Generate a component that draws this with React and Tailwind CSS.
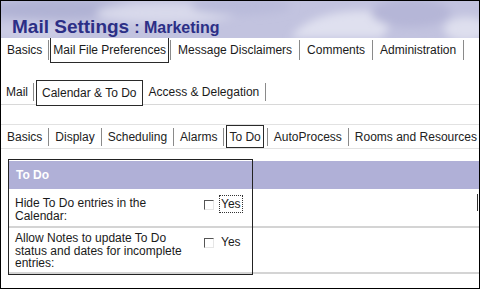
import React from 'react';

const Sep = ({ h = 'h-[20px]' }) => (
    <span className={`${h} w-px bg-[#8a8a8a] shrink-0`} />
);

const Tab = ({ label, selected, box = 'px-[5px]', pad = 'px-[6px]' }) => {
    if (selected) {
        return (
            <span className={`h-full flex items-center border border-[#2a2a2a] bg-white whitespace-nowrap ${box}`}>
                {label}
            </span>
        );
    }
    return <span className={`${pad} whitespace-nowrap`}>{label}</span>;
};

const HeaderArt = () => (
    <svg className="absolute inset-0" width="480" height="37" viewBox="0 0 480 37">
        <defs>
            <filter id="blur" x="-20%" y="-50%" width="140%" height="200%">
                <feGaussianBlur stdDeviation="4" />
            </filter>
        </defs>
        <rect width="480" height="37" fill="#c2c3df" />
        <g filter="url(#blur)">
            <ellipse cx="60" cy="8" rx="80" ry="10" fill="#b0b2d4" />
            <ellipse cx="165" cy="12" rx="70" ry="10" fill="#d8d9eb" />
            <ellipse cx="240" cy="5" rx="50" ry="9" fill="#b9bbda" />
            <path d="M290 37 C300 20 330 8 370 10 C390 11 395 20 380 37 Z" fill="#dfe0ef" />
            <ellipse cx="410" cy="12" rx="40" ry="14" fill="#b5b6d7" />
            <ellipse cx="465" cy="28" rx="22" ry="12" fill="#dedfee" />
            <ellipse cx="30" cy="30" rx="40" ry="8" fill="#cdcee5" />
        </g>
    </svg>
);

const Checkbox = () => (
    <span className="w-[10px] h-[10px] shrink-0 bg-white border-t border-l border-t-[#555] border-l-[#555] border-b border-r border-b-[#e6e6e6] border-r-[#e6e6e6]" />
);

const App = () => {
    return (
        <div className="w-[480px] h-[289px] overflow-hidden bg-white border border-black text-[12px] text-[#1a1a1a] font-['Liberation_Sans',Arial,sans-serif]">
            {/* title band */}
            <div className="relative h-[36px]">
                <HeaderArt />
                <h1 className="relative flex items-baseline pl-[11px] pt-[16px] leading-none font-bold text-[#2c2f86]">
                    <span className="text-[19px]">Mail Settings</span>
                    <span className="text-[16px] ml-[5px]">: Marketing</span>
                </h1>
            </div>

            {/* tab row 1 */}
            <div className="flex items-center h-[26px]">
                <Tab label="Basics" />
                <Sep />
                <Tab label="Mail File Preferences" selected box="ml-[1px] px-[2px]" />
                <span className="w-px" />
                <Sep />
                <Tab label="Message Disclaimers" pad="px-[7px]" />
                <Sep />
                <Tab label="Comments" pad="px-[7px]" />
                <Sep />
                <Tab label="Administration" pad="px-[7px]" />
                <Sep />
            </div>

            {/* tab row 2 */}
            <div className="flex items-center h-[25px] mt-[17px] border-b border-[#d8d8d8]">
                <span className="pl-[5px] pr-[5px]">Mail</span>
                <Sep h="h-[18px]" />
                <span className="h-[26px] self-start flex">
                    <Tab label="Calendar & To Do" selected box="ml-[2px] px-[5px]" />
                </span>
                <Tab label="Access & Delegation" />
                <Sep h="h-[18px]" />
            </div>

            {/* tab row 3 */}
            <div className="flex items-center h-[25px] mt-[19px] border-t border-b border-[#e2e2e2] text-[#222]">
                <Tab label="Basics" />
                <Sep h="h-[18px]" />
                <Tab label="Display" />
                <Sep h="h-[18px]" />
                <Tab label="Scheduling" />
                <Sep h="h-[18px]" />
                <Tab label="Alarms" />
                <Sep h="h-[18px]" />
                <Tab label="To Do" selected box="ml-[2px] mr-[3px] px-[2px]" />
                <Sep h="h-[18px]" />
                <Tab label="AutoProcess" />
                <Sep h="h-[18px]" />
                <Tab label="Rooms and Resources" />
            </div>

            {/* settings table */}
            <div className="relative mt-[10px] pt-[1px] pl-[7px]">
                <div className="h-[28px] ml-[1px] mt-[1px] bg-[#b0b0d7] flex items-center pl-[7px] font-bold text-white">
                    To Do
                </div>
                <div className="ml-[1px] flex h-[39px] border-b-2 border-[#d4d4d4]">
                    <div className="w-[176px] pl-[6px] pt-[8px] leading-[12.5px]">
                        Hide To Do entries in the Calendar:
                    </div>
                    <div className="flex items-start pt-[11px] pl-[19px]">
                        <Checkbox />
                        <span className="ml-[5px] -mt-[5px] px-[1px] py-[2px] border border-dotted border-[#333] leading-none">
                            Yes
                        </span>
                    </div>
                    <div className="ml-auto mt-[5px] h-[17px] w-px bg-[#333] mr-[1px]" />
                </div>
                <div className="ml-[1px] flex h-[46px] border-b-2 border-[#d4d4d4]">
                    <div className="w-[176px] pl-[6px] pt-[4px] leading-[12.5px]">
                        Allow Notes to update To Do status and dates for incomplete entries:
                    </div>
                    <div className="flex items-start pt-[10px] pl-[19px]">
                        <Checkbox />
                        <span className="ml-[7px] -mt-[2px] leading-none">Yes</span>
                    </div>
                </div>
                {/* focus outline around the first column */}
                <div className="absolute left-[7px] top-0 w-[245px] h-[116px] border border-[#222] pointer-events-none" />
            </div>
        </div>
    );
};

export default App;
